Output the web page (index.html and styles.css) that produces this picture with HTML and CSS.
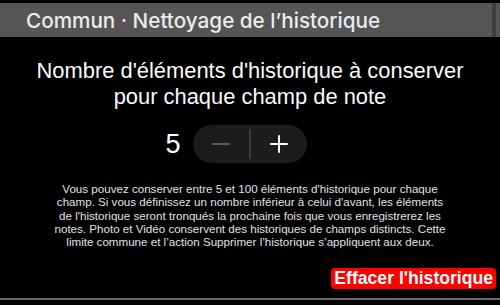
FILE: index.html
```html
<!DOCTYPE html>
<html lang="fr">
<head>
<meta charset="utf-8">
<link rel="stylesheet" href="styles.css">
</head>
<body>
<div class="screen">
  <header class="bar">
    <h1 class="bar-title">Commun · Nettoyage de l’historique</h1>
    <div class="bar-edge"></div>
  </header>
  <main class="content">
    <h2 class="heading">Nombre d'éléments d'historique à conserver<br>pour chaque champ de note</h2>
    <div class="stepper-row">
      <span class="count">5</span>
      <div class="stepper">
        <button class="step minus" aria-label="Moins">
          <svg width="18" height="18" viewBox="0 0 18 18"><path d="M1 9h16" stroke="#5e5e62" stroke-width="2" stroke-linecap="round"/></svg>
        </button>
        <span class="divider"></span>
        <button class="step plus" aria-label="Plus">
          <svg width="18" height="18" viewBox="0 0 18 18"><path d="M1 9h16M9 1v16" stroke="#ffffff" stroke-width="2" stroke-linecap="round"/></svg>
        </button>
      </div>
    </div>
    <p class="note">Vous pouvez conserver entre 5 et 100 éléments d'historique pour chaque<br>champ. Si vous définissez un nombre inférieur à celui d'avant, les éléments<br>de l'historique seront tronqués la prochaine fois que vous enregistrerez les<br>notes. Photo et Vidéo conservent des historiques de champs distincts. Cette<br>limite commune et l’action Supprimer l’historique s’appliquent aux deux.</p>
    <div class="actions">
      <button class="danger">Effacer l'historique</button>
    </div>
  </main>
  <div class="bottom-line"></div>
</div>
</body>
</html>
```
FILE: styles.css
```css
* { box-sizing: border-box; }
html, body { margin: 0; padding: 0; background: #000; }
body { font-family: "Liberation Sans", Arial, sans-serif; color: #fff; }
.screen { width: 500px; height: 305px; display: flex; flex-direction: column; overflow: hidden; padding-top: 3px; }
.bar { height: 34px; background: #555555; display: flex; align-items: center; }
.bar-title { flex: 1; margin: 0; padding-left: 26px; font-family: Inter, "Liberation Sans", sans-serif; font-size: 20.7px; font-weight: 500; color: #ececec; }
.bar-edge { width: 4px; height: 100%; background: #3f3f3f; margin-right: 4px; }
.content { flex: 1; display: flex; flex-direction: column; align-items: center; }
.heading { margin: 21px 0 0; font-weight: 400; font-size: 21.9px; line-height: 26px; text-align: center; color: #fafafa; }
.stepper-row { display: flex; align-items: center; gap: 12px; margin-top: 15px; margin-left: -28px; }
.count { font-size: 27px; line-height: 38px; color: #fff; }
.stepper { width: 114px; height: 38px; border-radius: 19px; background: #1c1c1e; display: flex; align-items: center; }
.step { flex: 1; height: 100%; border: 0; background: transparent; padding: 0; display: flex; align-items: center; justify-content: center; }
.divider { width: 2px; height: 30px; background: #3a3a3c; }
.note { margin: 19px 0 0; width: 460px; font-size: 11.6px; line-height: 13.3px; text-align: center; color: #e0e0e0; }
.actions { align-self: stretch; display: flex; justify-content: flex-end; margin-top: 20px; padding-right: 4px; }
.danger { background: #ff0000; color: #fff; border: 0; border-radius: 4px; font-family: inherit; font-weight: 700; font-size: 17.6px; height: 21px; line-height: 21px; padding: 0 3px; }
.bottom-line { height: 2px; background: #6a6a6a; margin-bottom: 5px; }
```
